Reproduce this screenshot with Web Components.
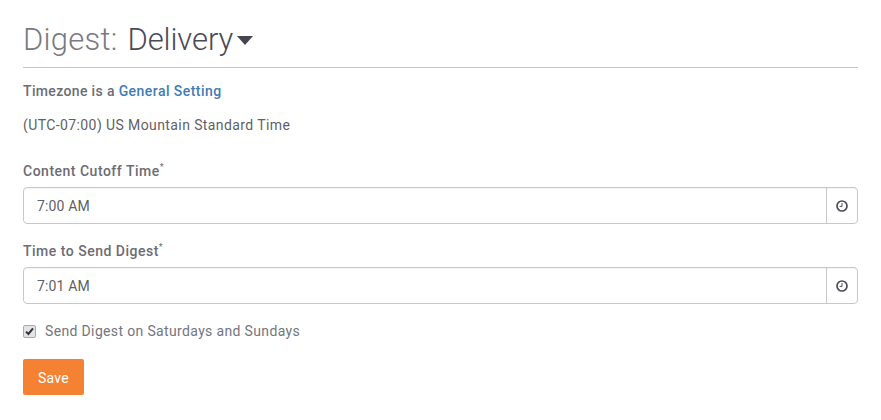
<!DOCTYPE html>
<html>
<head>
<meta charset="utf-8">
<title>Digest: Delivery</title>
<style>
  html, body { margin: 0; background: #fff; }
  body { font-family: Roboto, "Liberation Sans", sans-serif; color: #6c6c75; }
</style>
</head>
<body>
<digest-page>
  <page-title label="Digest:" value="Delivery"></page-title>
  <setting-note>Timezone is a <a slot="link">General Setting</a></setting-note>
  <time-field label="Content Cutoff Time" value="7:00 AM"></time-field>
  <time-field label="Time to Send Digest" value="7:01 AM"></time-field>
  <check-row checked>Send Digest on Saturdays and Sundays</check-row>
  <save-button>Save</save-button>
</digest-page>

<script>
// Page wrapper
class DigestPage extends HTMLElement {
  constructor() {
    super();
    this.attachShadow({ mode: 'open' });
    this.shadowRoot.innerHTML = `
      <style>
        :host { display: flex; flex-direction: column; width: 835px; height: 420px; padding: 0 23px; box-sizing: content-box; overflow: hidden; }
      </style>
      <slot></slot>`;
  }
}

class PageTitle extends HTMLElement {
  constructor() {
    super();
    this.attachShadow({ mode: 'open' });
  }
  connectedCallback() {
    this.shadowRoot.innerHTML = `
      <style>
        :host { display: flex; align-items: center; height: 68px; padding-top: 11px; box-sizing: border-box; border-bottom: 1px solid #c4c4c8; font-size: 31px; font-weight: 300; color: #7a7a82; white-space: nowrap; }
        .label { letter-spacing: 0.25px; }
        .value { margin-left: 10px; color: #4a4a56; letter-spacing: -0.1px; }
        svg { margin-left: 4px; margin-top: 3px; }
      </style>
      <span class="label">${this.getAttribute('label')}</span>
      <span class="value">${this.getAttribute('value')}</span>
      <svg width="16" height="9" viewBox="0 0 16 9"><path d="M0 0H16L8 9Z" fill="#454552"/></svg>`;
  }
}

class SettingNote extends HTMLElement {
  constructor() {
    super();
    this.attachShadow({ mode: 'open' });
    this.shadowRoot.innerHTML = `
      <style>
        :host { display: block; font-size: 14px; }
        .line { margin-top: 14px; height: 18px; line-height: 18px; font-weight: 500; letter-spacing: 0.35px; color: #6c6c75; }
        ::slotted(a) { color: #3f7cb5; letter-spacing: 0.45px; }
        .tz { margin-top: 16px; height: 18px; line-height: 18px; letter-spacing: 0.4px; color: #5f5f68; }
      </style>
      <div class="line"><slot></slot><slot name="link"></slot></div>
      <div class="tz">(UTC-07:00) US Mountain Standard Time</div>`;
  }
}

class TimeField extends HTMLElement {
  constructor() {
    super();
    this.attachShadow({ mode: 'open' });
  }
  connectedCallback() {
    this.shadowRoot.innerHTML = `
      <style>
        :host { display: block; margin-top: 28px; }
        :host(:nth-of-type(2)) { margin-top: 18px; }
        label { display: block; height: 18px; line-height: 18px; font-size: 14px; font-weight: 500; letter-spacing: 0.5px; color: #6c6c75; }
        sup { font-size: 9px; line-height: 0; font-weight: 400; vertical-align: 6px; margin-left: 0; }
        .group { display: flex; height: 37px; margin-top: 7px; box-sizing: border-box; border: 1px solid #c8c8cc; border-radius: 4px; box-shadow: inset 0 1px 1px rgba(0,0,0,.05); }
        .input { flex: 1; padding-left: 13px; line-height: 37px; font-size: 14px; letter-spacing: 0.15px; color: #5f5f68; }
        .addon { display: flex; align-items: center; justify-content: center; width: 30px; border-left: 1px solid #c8c8cc; }
        svg { margin-right: 1px; }
      </style>
      <label>${this.getAttribute('label')}<sup>*</sup></label>
      <div class="group">
        <div class="input">${this.getAttribute('value')}</div>
        <div class="addon">
          <svg width="12" height="12" viewBox="0 0 12 12" fill="none" stroke="#4d4d58">
            <circle cx="6" cy="6" r="5" stroke-width="1.7"/>
            <path d="M6 3V6.4H3.6" stroke-width="1"/>
          </svg>
        </div>
      </div>`;
  }
}

class CheckRow extends HTMLElement {
  constructor() {
    super();
    this.attachShadow({ mode: 'open' });
    this.shadowRoot.innerHTML = `
      <style>
        :host { display: flex; align-items: center; margin-top: 18px; height: 18px; font-size: 14px; letter-spacing: 0.35px; color: #75757e; }
        .box { display: flex; align-items: center; justify-content: center; width: 11px; height: 11px; margin-right: 9px; border: 1px solid #a9a9ad; border-radius: 2px; background: #e4e4e6; }
      </style>
      <span class="box" role="checkbox" aria-checked="true">
        <svg width="9" height="9" viewBox="0 0 9 9"><path d="M1 4.6 3.4 7 8 1.4" fill="none" stroke="#333338" stroke-width="2"/></svg>
      </span>
      <span><slot></slot></span>`;
  }
}

class SaveButton extends HTMLElement {
  constructor() {
    super();
    this.attachShadow({ mode: 'open' });
    this.shadowRoot.innerHTML = `
      <style>
        :host { display: block; margin-top: 19px; align-self: flex-start; }
        button { width: 61px; height: 36px; padding: 2px 0 0; border: 0; border-radius: 2px; background: #f58233; color: #fff; font: 400 14px Roboto, "Liberation Sans", sans-serif; letter-spacing: 0.3px; }
      </style>
      <button><slot></slot></button>`;
  }
}

customElements.define('digest-page', DigestPage);
customElements.define('page-title', PageTitle);
customElements.define('setting-note', SettingNote);
customElements.define('time-field', TimeField);
customElements.define('check-row', CheckRow);
customElements.define('save-button', SaveButton);
</script>
</body>
</html>
